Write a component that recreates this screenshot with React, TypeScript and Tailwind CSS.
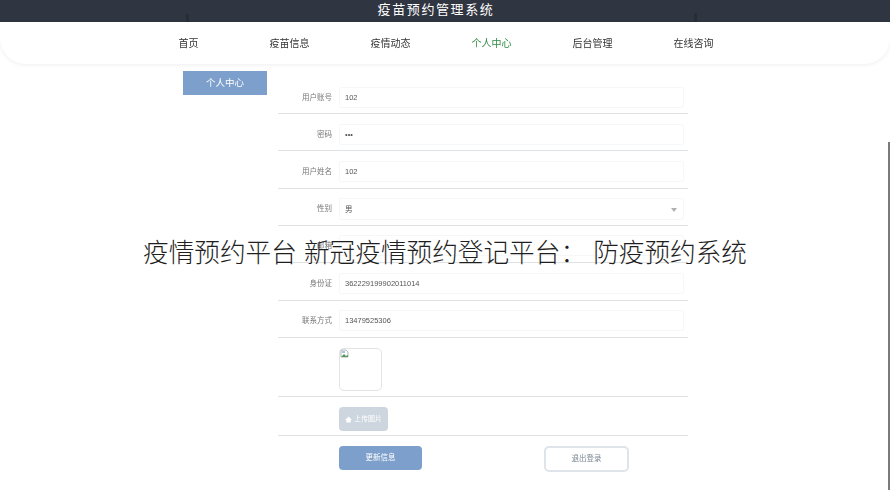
const navItems = ['首页', '疫苗信息', '疫情动态', '个人中心', '后台管理', '在线咨询'];

function Row({ label, children, className }: { label?: string; children: React.ReactNode; className: string }) {
  return (
    <div className={`flex items-start border-b border-[#dfe2e5] ${className}`}>
      <div className="w-[55px] shrink-0 pr-[1px] text-right text-[7.5px] leading-[21px] text-[#777]">{label}</div>
      <div className="ml-[6px] w-[345px]">{children}</div>
    </div>
  );
}

function Field({ value }: { value: string }) {
  return (
    <div className="flex h-[21px] items-center justify-between rounded-[2px] border border-[#f6f7f8] bg-white px-[5px] text-[7.5px] text-[#555]">
      <span>{value}</span>
    </div>
  );
}

export default function App() {
  return (
    <div className="relative h-[490px] w-[890px] overflow-hidden bg-white font-['Liberation_Sans','Noto_Sans_CJK_SC',sans-serif]">
      <header className="flex h-[22px] items-center justify-center bg-[#2f3541] pb-[3px] pr-[18px] text-[13px] tracking-[1.6px] text-white">
        疫苗预约管理系统
      </header>

      <nav className="flex h-[42px] items-center rounded-b-[26px] bg-white pl-[138px] shadow-[0_1px_4px_rgba(0,0,0,0.07)] blur-[0.3px]">
        {navItems.map((item) => (
          <a
            key={item}
            className={`w-[101px] text-center text-[10px] ${item === '个人中心' ? 'text-[#2e8b45]' : 'text-[#333]'}`}
          >
            {item}
          </a>
        ))}
      </nav>

      <main className="flex pl-[183px] pt-[7px] blur-[0.3px]">
        <aside className="h-[24px] w-[84px] bg-[#7d9fcb] text-center text-[9.5px] leading-[24px] text-white">个人中心</aside>

        <form className="ml-[11px] mt-[16px] w-[410px]">
          <Row label="用户账号" className="h-[27px]">
            <Field value="102" />
          </Row>
          <Row label="密码" className="mt-[10px] h-[27px]">
            <Field value="•••" />
          </Row>
          <Row label="用户姓名" className="mt-[10px] h-[28px]">
            <Field value="102" />
          </Row>
          <Row label="性别" className="mt-[9px] h-[28px]">
            <div className="flex h-[22px] items-center justify-between rounded-[2px] border border-[#f6f7f8] pl-[5px] pr-[6px] pt-[2px] text-[7.5px] text-[#555]">
              <span>男</span>
              <svg width="6" height="4" viewBox="0 0 6 4" fill="#b0b0b0">
                <path d="M0 0h6L3 4z" />
              </svg>
            </div>
          </Row>
          <Row label="邮箱" className="mt-[9px] h-[28px]">
            <Field value="" />
          </Row>
          <Row label="身份证" className="mt-[10px] h-[28px]">
            <Field value="362229199902011014" />
          </Row>
          <Row label="联系方式" className="mt-[9px] h-[28px]">
            <Field value="13479525306" />
          </Row>
          <Row className="h-[59px] pt-[10px]">
            <div className="h-[43px] w-[43px] rounded-[5px] border border-[#e2e3e5] bg-white">
              <svg width="9" height="9" viewBox="0 0 9 9">
                <path d="M1 1h5l2 2v5H1z" fill="#fff" stroke="#b5b5b5" />
                <path d="M1 8l3-3 2 2 2-1v2z" fill="#4f9a5b" />
                <path d="M2 2h3v2H2z" fill="#a9c3e6" />
              </svg>
            </div>
          </Row>
          <Row className="h-[39px] pt-[10px]">
            <div className="flex h-[24px] w-[49px] items-center justify-center gap-[2px] rounded-[4px] bg-[#cdd6df] text-[7px] text-white">
              <svg width="7" height="7" viewBox="0 0 8 8" fill="currentColor">
                <path d="M4 .5 8 4.5H6.5V7.5h-5V4.5H0z" />
              </svg>
              上传图片
            </div>
          </Row>
          <div className="ml-[61px] mt-[10px] flex items-start">
            <button type="button" className="h-[24px] w-[83px] rounded-[4px] bg-[#7d9fcb] text-[7.5px] text-white">
              更新信息
            </button>
            <button
              type="button"
              className="ml-[122px] h-[26px] w-[85px] rounded-[5px] border-2 border-[#dfe4ea] bg-white text-[7.5px] text-[#7d8794]"
            >
              退出登录
            </button>
          </div>
        </form>
      </main>

      <div className="absolute left-0 right-0 top-[236px] text-center text-[25.65px] font-light leading-[34px] text-[#1f1f1f]">
        疫情预约平台 新冠疫情预约登记平台： 防疫预约系统
      </div>

      {/* faint marks bleeding through the header */}
      <div className="absolute left-[186px] top-[14px] h-[8px] w-[3px] bg-[#272c35] blur-[0.5px]" />
      <div className="absolute left-[694px] top-[13px] h-[9px] w-[3px] bg-[#272c35] blur-[0.5px]" />

      <div className="absolute bottom-0 right-0 top-[142px] w-[2px] bg-[#7b7b7b]" />
    </div>
  );
}
